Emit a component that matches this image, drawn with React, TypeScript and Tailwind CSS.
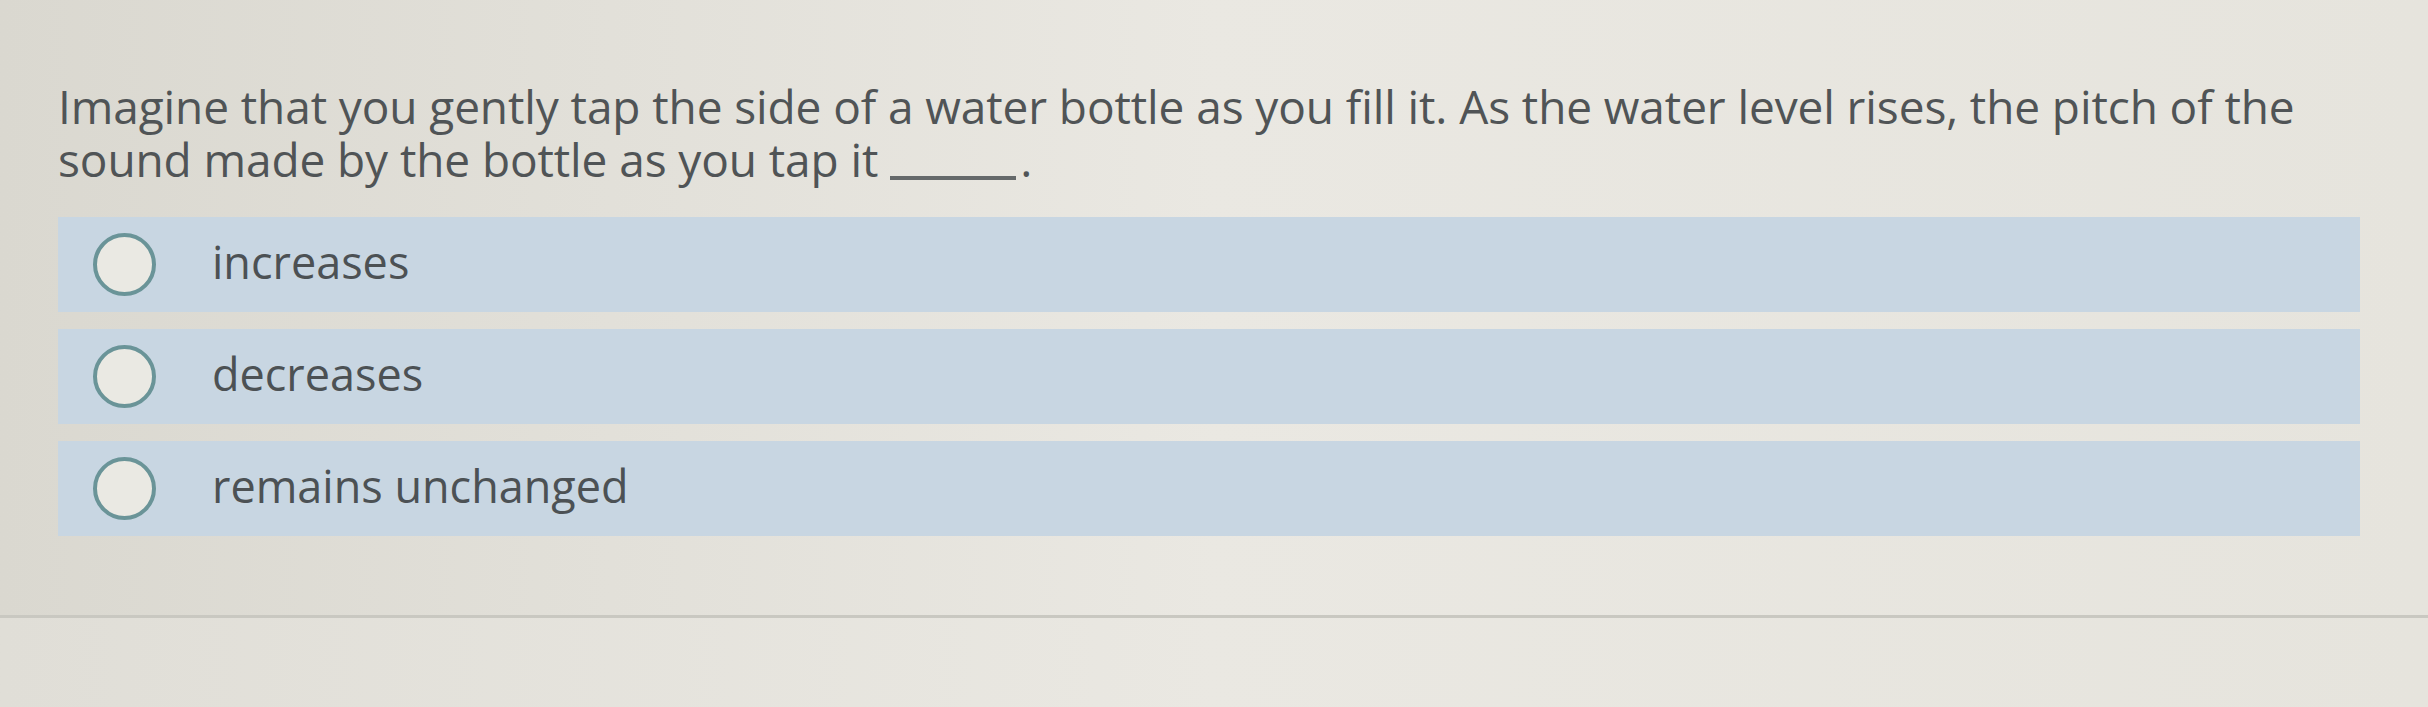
import React from "react"

const OPTIONS = ["increases", "decreases", "remains unchanged"]

function Radio() {
  return (
    <span className="h-[63px] w-[63px] shrink-0 rounded-full border-[4px] border-[#6a9498] bg-[#eae9e3]" />
  )
}

export default function App() {
  return (
    <div
      className="flex h-[707px] w-[2428px] flex-col overflow-hidden bg-gradient-to-r from-[#dad8d0] via-[#eae8e2] to-[#e6e4dd] text-[#505456]"
      style={{ fontFamily: '"Open Sans", "Noto Sans", sans-serif' }}
    >
      <div className="pl-[58px] pr-[68px] pt-[80px]">
        <p className="text-[46px] font-medium leading-[53px] tracking-[-0.1px]">
          Imagine that you gently tap the side of a water bottle as you fill it. As the water level rises, the pitch of the
          sound made by the bottle as you tap it{" "}
          <span className="mr-[4px] inline-block h-[4px] w-[126px] bg-[#65696a] align-[-3px]" />.
        </p>

        <div className="mt-[31px] flex flex-col gap-[17px]">
          {OPTIONS.map((label) => (
            <label
              key={label}
              className="flex h-[95px] cursor-pointer items-center bg-[#c8d6e2] pl-[35px]"
            >
              <Radio />
              <span className="ml-[56px] pb-[6px] text-[45px] font-medium leading-none text-[#4c5154]">{label}</span>
            </label>
          ))}
        </div>
      </div>

      <div className="mt-[79px] h-[3px] bg-[#c9c8c1]" />
      <div className="flex-1 bg-gradient-to-r from-[#e0ded7] via-[#eae8e2] to-[#e6e4dd]" />
    </div>
  )
}
